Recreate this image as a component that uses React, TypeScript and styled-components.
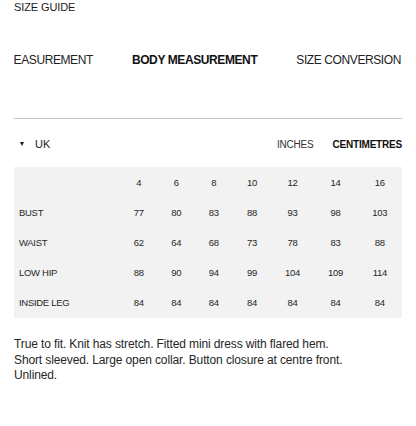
import React from "react";
import styled, { createGlobalStyle } from "styled-components";

const Global = createGlobalStyle`
  html, body { margin: 0; padding: 0; background: #ffffff; }
  body { font-family: "Liberation Sans", Arial, sans-serif; color: #1a1a1a; }
  * { box-sizing: border-box; }
`;

const Page = styled.div`
  width: 416px;
  padding: 0 14px;
`;

const Title = styled.div`
  font-size: 11px;
  line-height: 14px;
  letter-spacing: -0.1px;
  color: #1a1a1a;
`;

const TabsViewport = styled.div`
  margin-top: 36px;
  height: 21px;
  display: flex;
  justify-content: flex-end;
  overflow: hidden;
  padding-right: 1px;
`;

const Tab = styled.div<{ $active?: boolean }>`
  flex-shrink: 0;
  font-size: 12px;
  line-height: 21px;
  letter-spacing: -0.4px;
  white-space: nowrap;
  font-weight: ${(p) => (p.$active ? 700 : 400)};
  color: ${(p) => (p.$active ? "#111" : "#222")};
  & + & { margin-left: 39px; }
`;

const Divider = styled.div`
  margin-top: 47px;
  height: 1px;
  background: #c6c6c6;
`;

const UnitRow = styled.div`
  margin-top: 15px;
  height: 20px;
  display: flex;
  align-items: center;
`;

const Region = styled.div`
  display: flex;
  align-items: center;
  flex: 1;
`;

const Caret = styled.span`
  width: 0;
  height: 0;
  margin-left: 6px;
  border-left: 2.5px solid transparent;
  border-right: 2.5px solid transparent;
  border-top: 4px solid #1a1a1a;
`;

const RegionLabel = styled.span`
  margin-left: 11px;
  font-size: 11px;
  color: #1a1a1a;
`;

const Unit = styled.span<{ $active?: boolean }>`
  font-size: 10px;
  letter-spacing: -0.2px;
  font-weight: ${(p) => (p.$active ? 700 : 400)};
  color: ${(p) => (p.$active ? "#111" : "#333")};
  & + & { margin-left: 19px; }
`;

const Table = styled.div`
  margin-top: 13px;
  background: #f2f2f2;
  display: grid;
  grid-template-columns: 106px 37.5px 37.5px 37.5px 39px 42px 44px 1fr;
  grid-auto-rows: 30px;
  padding-bottom: 1px;
`;

const Cell = styled.div<{ $label?: boolean }>`
  display: flex;
  align-items: center;
  justify-content: ${(p) => (p.$label ? "flex-start" : "center")};
  padding-left: ${(p) => (p.$label ? "5px" : "0")};
  font-size: 9.5px;
  letter-spacing: -0.3px;
  color: #262626;
`;

const Description = styled.p`
  margin: 19px 0 0;
  max-width: 340px;
  font-size: 12px;
  line-height: 15.5px;
  letter-spacing: -0.12px;
  color: #262626;
`;

const sizes = ["4", "6", "8", "10", "12", "14", "16"];
const rows: [string, number[]][] = [
  ["BUST", [77, 80, 83, 88, 93, 98, 103]],
  ["WAIST", [62, 64, 68, 73, 78, 83, 88]],
  ["LOW HIP", [88, 90, 94, 99, 104, 109, 114]],
  ["INSIDE LEG", [84, 84, 84, 84, 84, 84, 84]],
];

export default function App() {
  return (
    <>
      <Global />
      <Page>
        <Title>SIZE GUIDE</Title>
        <TabsViewport>
          <Tab>MEASUREMENT</Tab>
          <Tab $active>BODY MEASUREMENT</Tab>
          <Tab>SIZE CONVERSION</Tab>
        </TabsViewport>
        <Divider />
        <UnitRow>
          <Region>
            <Caret />
            <RegionLabel>UK</RegionLabel>
          </Region>
          <Unit>INCHES</Unit>
          <Unit $active>CENTIMETRES</Unit>
        </UnitRow>
        <Table>
          <Cell $label />
          {sizes.map((s) => (
            <Cell key={s}>{s}</Cell>
          ))}
          {rows.map(([label, vals]) => (
            <React.Fragment key={label}>
              <Cell $label>{label}</Cell>
              {vals.map((v, i) => (
                <Cell key={i}>{v}</Cell>
              ))}
            </React.Fragment>
          ))}
        </Table>
        <Description>
          True to fit. Knit has stretch. Fitted mini dress with flared hem.
          Short sleeved. Large open collar. Button closure at centre front.
          Unlined.
        </Description>
      </Page>
    </>
  );
}
